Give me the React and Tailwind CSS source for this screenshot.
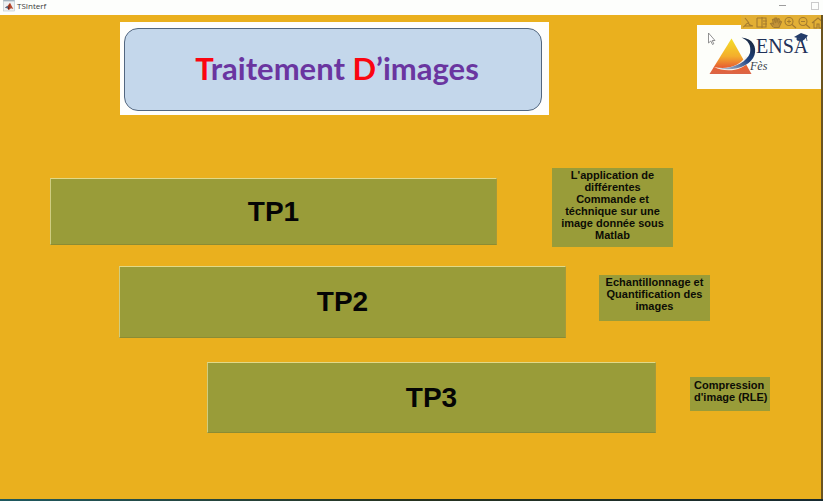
import React from "react";

function MatlabIcon() {
  return (
    <svg viewBox="0 0 12 12" className="h-3 w-3 shrink-0" aria-hidden="true">
      <rect x="0.5" y="0.5" width="11" height="10.5" fill="#eef1f3" stroke="#b9c3ca" strokeWidth="0.6" />
      <path d="M0.5 0.8h11" stroke="#8fa3b3" />
      <path d="M2 7.5 4.5 6 7 2.8l1.4 2.8L10.3 9 8 8.2 5.8 10 4.4 8.2Z" fill="#b5482f" />
      <path d="M2 7.5 4.5 6l1.2 1.4L4.4 8.4Z" fill="#4f6f8d" />
      <path d="M7 3.6 6 8.6 5.8 10 4.8 8.4Z" fill="#6d2420" />
    </svg>
  );
}

function TitleBar() {
  return (
    <header className="flex h-[15px] shrink-0 items-start bg-[#fdfefc] pl-[3px] pr-1">
      <MatlabIcon />
      <h1 className="ml-[2px] font-['Open_Sans',sans-serif] text-[8px] leading-3 text-[#3a3a3a]">TSInterf</h1>
      <div className="ml-auto flex items-center gap-6">
        <button aria-label="Réduire" className="flex h-[10px] w-2 items-center">
          <span className="h-px w-[7px] bg-[#9d9d9d]" />
        </button>
        <button aria-label="Agrandir" className="flex h-[10px] w-2 items-end">
          <span className="h-2 w-2 border border-[#cbcbcb]" />
        </button>
      </div>
    </header>
  );
}

function Tool({ label, children }) {
  return (
    <button aria-label={label} className="h-[13px] w-[14px] shrink-0">
      <svg viewBox="0 0 14 13" className="h-full w-full" fill="none" stroke="#a47b2e" strokeWidth="1.1">
        {children}
      </svg>
    </button>
  );
}

function AxesToolbar() {
  return (
    <div className="absolute right-0 top-0 flex h-[14px] w-20 items-end overflow-hidden bg-[#e2af35]">
      <Tool label="Pinceau">
        <path d="M4 2l4 5M2 11c2 0 2-3 5-4l3 3H3M9 9l3 1" />
      </Tool>
      <Tool label="Info-bulle">
        <path d="M2 2h3M2 2v9h3M7 1v11M5 2h6v9H5M8 5h4M8 8h4" />
      </Tool>
      <Tool label="Déplacer">
        <path d="M4 11 1.5 7.5 3 7l1.5 1L3.5 3.5 5 3l1.5 4L6 2h1.5L8 6.5 9 2.5l1.3.5L10 7l1.500-2 1 .8L10 11.500H4.500" fill="#c39338" />
      </Tool>
      <Tool label="Zoom avant">
        <circle cx="6" cy="5.5" r="4" />
        <path d="M9 8.500l4 3.500M4 5.500h4M6 3.500v4" />
      </Tool>
      <Tool label="Zoom arrière">
        <circle cx="6" cy="5.5" r="4" />
        <path d="M9 8.500l4 3.500M4 5.500h4" />
      </Tool>
      <Tool label="Restaurer la vue">
        <path d="M1 7l6-5 6 5M3 6v6h3V8h2v4h3V6" />
      </Tool>
    </div>
  );
}

function EnsaLogo() {
  return (
    <svg viewBox="0 0 124 64" className="h-16 w-[124px] shrink-0 bg-[#fdfefa]" role="img" aria-label="ENSA Fès">
      <defs>
        <linearGradient id="sun" x1="0" y1="0" x2="0" y2="1">
          <stop offset="0" stopColor="#f4df27" />
          <stop offset="0.5" stopColor="#f4ae2c" />
          <stop offset="0.8" stopColor="#e76232" />
          <stop offset="1" stopColor="#db6548" />
        </linearGradient>
        <linearGradient id="ink" x1="0" y1="1" x2="1" y2="0">
          <stop offset="0" stopColor="#c9cfd8" />
          <stop offset="0.55" stopColor="#1f4483" />
          <stop offset="1" stopColor="#18212f" />
        </linearGradient>
      </defs>
      <path d="M34.500 13.500 12.500 49H54.500Z" fill="url(#sun)" />
      <path d="M17 42C30 45 43 41 49 31L54 35C46 46 29 48 17 42Z" fill="#f6f2ec" />
      <path d="M44.500 12.500C56 13.500 60 22 57.500 30 54 40.500 38 47 20 43 36 44.500 50 37 53 28 54.500 20 51 15.500 44.500 12.500Z" fill="url(#ink)" />
      <text x="59" y="28" fontFamily="Liberation Serif, serif" fontSize="20" fill="#1f3158">ENSA</text>
      <text x="53" y="45" fontFamily="Liberation Serif, serif" fontStyle="italic" fontSize="12" fill="#39424c">Fès</text>
      <path d="M97 12 104 8l7 2.500-4 4.500Z" fill="#233c69" />
      <path d="M100 13v2l5 1.500 2-3M109 11l1 5" fill="#233c69" stroke="#233c69" strokeWidth="0.8" />
      <path d="M11.500 8v10l2.300-2 1.700 3.500 1.300-.7-1.600-3.300H18Z" fill="#fff" stroke="#777" strokeWidth="0.8" />
    </svg>
  );
}

function Banner() {
  return (
    <div className="flex h-[93px] min-w-0 flex-1 bg-[#fefefd] pb-1 pl-1 pr-[7px] pt-[6px]">
      <h2 className="flex flex-1 items-center justify-center rounded-[14px] border border-[#536780] bg-[#c4d7eb] pb-1 pl-2 font-['Lato',sans-serif] text-[31px] font-bold leading-9 text-[#6a35a0]">
        <span className="whitespace-nowrap">
          <span className="text-[#fb0510]">T</span>raitement <span className="text-[#fb0510]">D</span>’images
        </span>
      </h2>
    </div>
  );
}

function Practical({ id, button, note, rowClass, buttonClass, noteClass }) {
  return (
    <section className={"flex " + rowClass}>
      <button
        aria-describedby={id + "-note"}
        className={"min-w-0 flex-1 border border-b-[#8b8c34] border-l-[#cfcd80] border-r-[#a59a3a] border-t-[#e2d987] bg-[#999c39] text-[28px] font-bold leading-8 text-[#050505] " + buttonClass}
      >
        {button}
      </button>
      <p id={id + "-note"} className={"shrink-0 bg-[#999c39] text-[11px] font-bold leading-3 text-[#0c0c05] " + noteClass}>
        {note}
      </p>
    </section>
  );
}

export default function App() {
  return (
    <div className="flex min-h-screen flex-col bg-[#eab01e] font-['Liberation_Sans',Arial,sans-serif]">
      <TitleBar />
      <main className="relative flex-1 border-r-2 border-[#6b541f] pt-[7px]">
        <div className="flex items-start pl-[120px]">
          <Banner />
          <div className="ml-[148px] mt-[3px]">
            <EnsaLogo />
          </div>
        </div>
        <AxesToolbar />
        <Practical
          id="tp1"
          button="TP1"
          note="L'application de différentes Commande et téchnique sur une image donnée sous Matlab"
          rowClass="mt-[53px] pl-[50px] pr-[148px]"
          buttonClass="mt-[10px] h-[67px]"
          noteClass="ml-[55px] h-[79px] w-[121px] px-1 pt-[1px] text-center"
        />
        <Practical
          id="tp2"
          button="TP2"
          note="Echantillonnage et Quantification des images"
          rowClass="mt-[19px] pl-[119px] pr-[111px]"
          buttonClass="h-[72px]"
          noteClass="ml-[33px] mt-[9px] h-[46px] w-[111px] px-1 pt-[1px] text-center"
        />
        <Practical
          id="tp3"
          button="TP3"
          note="Compression d'image (RLE)"
          rowClass="mt-6 pl-[207px] pr-[51px]"
          buttonClass="h-[71px]"
          noteClass="ml-[34px] mt-[15px] h-[34px] w-20 pl-1 pt-[2px]"
        />
      </main>
      <footer className="h-[2px] shrink-0 bg-linear-to-r from-[#1d5960] via-[#26331f] to-[#172a30]" />
    </div>
  );
}
